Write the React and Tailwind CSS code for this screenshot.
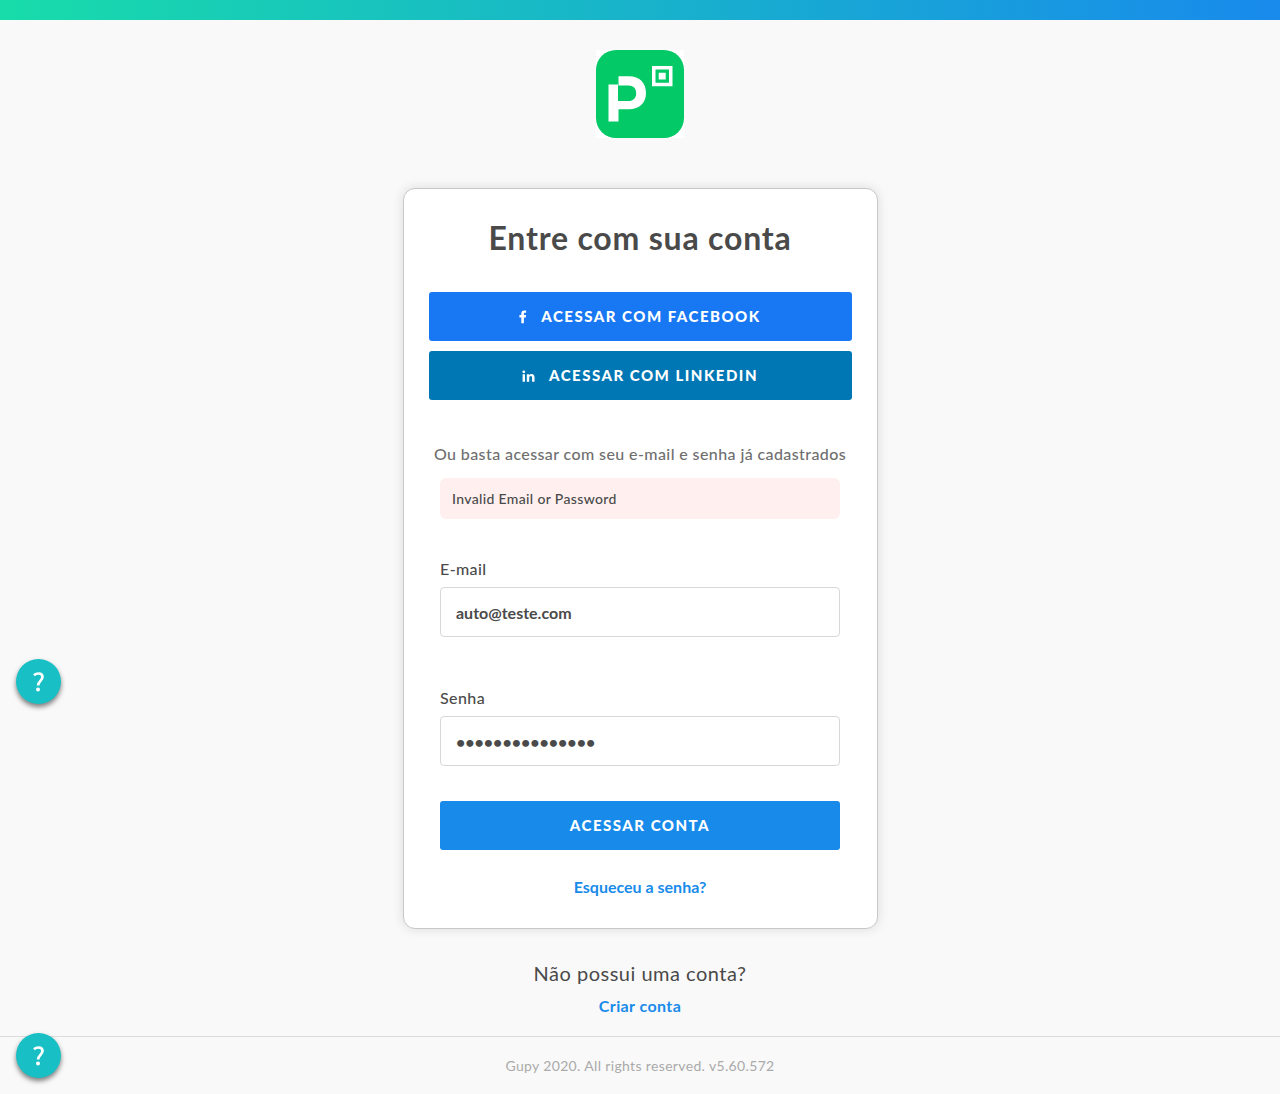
import React from "react";

function Logo() {
  return (
    <svg viewBox="0 0 88 88" className="size-22" role="img" aria-label="PicPay">
      <rect width="88" height="88" fill="#fff" />
      <rect width="88" height="88" rx="20" fill="#03c966" />
      <path
        fill="#fff"
        fillRule="evenodd"
        d="M12.500 34.500H22V51H32.500C37.200 51 40.200 48 40.200 43.200C40.200 38.300 37.200 35.500 32.500 35.500H22.500V26.200H33C43.500 26.200 50 32.700 50 43C50 53 43.500 59.200 33 59.200H22.500V71.500H12.500Z"
      />
      <path fill="#fff" fillRule="evenodd" d="M56 16H76.500V36.200H56ZM59.500 19.500V32.700H73V19.500ZM62.700 22.800H69.700V29.500H62.700Z" />
    </svg>
  );
}

function FacebookIcon() {
  return (
    <svg viewBox="0 0 8 14" className="h-3.5 w-2" fill="currentColor" aria-hidden="true">
      <path d="M2.300 13.200V7.400H0.400V5.100H2.300V3.700C2.300 1.500 3.300 0.500 5.400 0.500H7.100V2.700H6C5.100 2.700 4.900 3.100 4.900 3.900V5.100H7.100L6.800 7.400H4.900V13.200Z" />
    </svg>
  );
}

function LinkedinIcon() {
  return (
    <svg viewBox="0 0 13 12" className="h-3 w-[13px]" fill="currentColor" aria-hidden="true">
      <circle cx="1.800" cy="1.800" r="1.400" />
      <path d="M0.600 4.200H3V11.700H0.600ZM4.800 4.200H7.100V5.200C7.600 4.400 8.400 4 9.500 4C11.700 4 12.500 5.300 12.500 7.500V11.700H10.100V8C10.100 6.800 9.800 6.100 8.800 6.100C7.700 6.100 7.200 6.900 7.200 8V11.700H4.800Z" />
    </svg>
  );
}

function HelpButton({ className }) {
  return (
    <button
      type="button"
      aria-label="Ajuda"
      className={`${className} fixed left-4 flex size-[45px] items-center justify-center rounded-full bg-[#18bfc4] text-white shadow-[0_3px_5px_rgba(0,0,0,0.5)]`}
    >
      <svg viewBox="0 0 12 20" className="h-5 w-3" fill="none" stroke="currentColor" aria-hidden="true">
        <path d="M1 3.200C2.300 2 3.900 1.500 5.500 1.500C8 1.500 9.500 2.900 9.500 5C9.500 8.800 5.100 9 5.100 13.600" strokeWidth="2.700" />
        <circle cx="5" cy="17.600" r="2" fill="currentColor" stroke="none" />
      </svg>
    </button>
  );
}

function Field({ id, label, ...props }) {
  return (
    <div>
      <label htmlFor={id} className="block text-base leading-6 font-medium tracking-wide">
        {label}
      </label>
      <input
        id={id}
        className="mt-1.5 block h-[50px] w-full rounded border border-[#d8d8d8] bg-white px-[15px] text-base font-bold outline-none"
        {...props}
      />
    </div>
  );
}

const buttonStyle =
  "flex h-[49px] w-full items-center justify-center gap-3.5 rounded-[3px] text-[15px] font-black uppercase tracking-widest text-white";

export default function App() {
  return (
    <div className="flex min-h-screen flex-col bg-[#f9f9f9] font-['Lato',sans-serif] text-[#4a4a4a]">
      <div className="h-5 bg-linear-to-r/srgb from-[#18dcaa] to-[#188aec]" />
      <main className="flex grow flex-col items-center pt-[30px] pb-4">
        <Logo />
        <section className="mt-[50px] w-[475px] max-w-full rounded-xl border border-[#c8c8c8] bg-white px-[25px] pt-7 pb-[29px] shadow-[0_0_12px_rgba(0,0,0,0.12)]">
          <h1 className="text-center text-[32px] leading-[42px] font-bold tracking-wide">Entre com sua conta</h1>
          <div className="mt-[33px] flex flex-col gap-2.5">
            <button type="button" className={`${buttonStyle} bg-[#1877f2]`}>
              <FacebookIcon />
              Acessar com Facebook
            </button>
            <button type="button" className={`${buttonStyle} bg-[#0077b5]`}>
              <LinkedinIcon />
              Acessar com LinkedIn
            </button>
          </div>
          <p className="mt-[42px] text-center text-base leading-6 font-medium tracking-wide text-[#6f6f6f]">
            Ou basta acessar com seu e-mail e senha já cadastrados
          </p>
          <form className="mx-auto mt-3 max-w-[400px]" onSubmit={(e) => e.preventDefault()}>
            <p role="alert" className="rounded-md bg-[#fff0ef] px-3 py-2.5 text-sm leading-[21px] font-medium tracking-wide">
              Invalid Email or Password
            </p>
            <div className="mt-[38px] flex flex-col gap-[49px]">
              <Field id="email" label="E-mail" type="email" defaultValue="auto@teste.com" />
              <Field id="password" label="Senha" type="password" defaultValue="senhasecreta123" />
            </div>
            <button type="submit" className={`${buttonStyle} mt-[35px] bg-[#188bea]`}>
              Acessar conta
            </button>
          </form>
          <p className="mt-[25px] text-center text-base leading-6">
            <a href="#senha" className="font-bold text-[#188bea]">
              Esqueceu a senha?
            </a>
          </p>
        </section>
        <p className="mt-[29px] text-xl leading-[30px] tracking-wide">Não possui uma conta?</p>
        <a href="#criar" className="mt-1.5 text-base leading-6 font-bold tracking-wide text-[#188bea]">
          Criar conta
        </a>
      </main>
      <footer className="border-t border-[#dcdcdc] py-[18px] text-center text-sm leading-[21px] tracking-wide text-[#aaa]">
        Gupy 2020. All rights reserved. v5.60.572
      </footer>
      <HelpButton className="bottom-[390px]" />
      <HelpButton className="bottom-4" />
    </div>
  );
}
